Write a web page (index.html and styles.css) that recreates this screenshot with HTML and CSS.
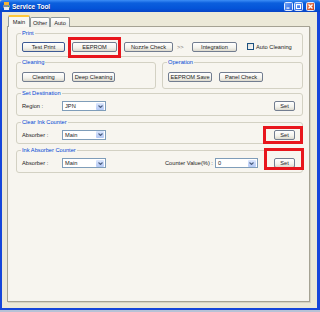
FILE: index.html
```html
<!DOCTYPE html>
<html lang="en">
<head>
    <meta charset="UTF-8">
    <meta name="viewport" content="width=device-width, initial-scale=1.0">
    <title>Service Tool</title>
    <link rel="stylesheet" href="styles.css">
</head>
<body>
    <div class="window">
        <div class="titlebar">
            <svg class="app-icon" width="7" height="8" viewBox="0 0 7 8">
                <rect x="1" y="0" width="5" height="3" fill="#f2b233"/>
                <rect x="0" y="3" width="7" height="3" fill="#7d8c9c"/>
                <rect x="1" y="5" width="5" height="3" fill="#ececec"/>
                <rect x="5" y="4" width="1" height="1" fill="#3fc43f"/>
            </svg>
            <span class="title">Service Tool</span>
            <div class="controls">
                <span class="ctl">
                    <svg width="7" height="7" viewBox="0 0 7 7"><rect x="1.5" y="4.5" width="3" height="1.2" fill="#fff"/></svg>
                </span>
                <span class="ctl">
                    <svg width="7" height="7" viewBox="0 0 7 7"><rect x="1.5" y="1.5" width="4" height="4" fill="none" stroke="#fff" stroke-width="1"/><rect x="1" y="1" width="5" height="1.2" fill="#fff"/></svg>
                </span>
                <span class="ctl ctl-close">
                    <svg width="7" height="7" viewBox="0 0 7 7"><path d="M1.5 1.5l4 4M5.5 1.5l-4 4" stroke="#fff" stroke-width="1.3"/></svg>
                </span>
            </div>
        </div>

        <div class="frame">
            <div class="tabs">
                <span class="tab tab-main active">Main</span>
                <span class="tab">Other</span>
                <span class="tab">Auto</span>
            </div>

            <div class="panel">
                <div class="group g-print">
                    <div class="group-title">Print</div>
                    <div class="row">
                        <button class="btn btn-default">Test Print</button>
                        <span class="mark mark-eeprom"><button class="btn btn-md">EEPROM</button></span>
                        <button class="btn btn-lg">Nozzle Check</button>
                        <span class="sep">&gt;&gt;</span>
                        <button class="btn btn-md">Integration</button>
                        <span class="check"></span>
                        <span class="check-label">Auto Cleaning</span>
                    </div>
                </div>

                <div class="pair">
                    <div class="group g-half">
                        <div class="group-title">Cleaning</div>
                        <div class="row">
                            <button class="btn">Cleaning</button>
                            <button class="btn">Deep Cleaning</button>
                        </div>
                    </div>
                    <div class="group g-half">
                        <div class="group-title">Operation</div>
                        <div class="row">
                            <button class="btn btn-op">EEPROM Save</button>
                            <button class="btn btn-op">Panel Check</button>
                        </div>
                    </div>
                </div>

                <div class="group g-dest">
                    <div class="group-title">Set Destination</div>
                    <div class="row">
                        <span class="field-label">Region :</span>
                        <div class="select">
                            <span class="select-value">JPN</span>
                            <span class="select-arrow"><svg width="5" height="3" viewBox="0 0 5 3"><path d="M0.5 0.5L2.5 2.5L4.5 0.5" fill="none" stroke="#4d6185" stroke-width="1.1"/></svg></span>
                        </div>
                        <button class="btn btn-sm push">Set</button>
                    </div>
                </div>

                <div class="group g-clear">
                    <div class="group-title">Clear Ink Counter</div>
                    <div class="row">
                        <span class="field-label">Absorber :</span>
                        <div class="select">
                            <span class="select-value">Main</span>
                            <span class="select-arrow"><svg width="5" height="3" viewBox="0 0 5 3"><path d="M0.5 0.5L2.5 2.5L4.5 0.5" fill="none" stroke="#4d6185" stroke-width="1.1"/></svg></span>
                        </div>
                        <span class="mark mark-clear push"><button class="btn btn-sm">Set</button></span>
                    </div>
                </div>

                <div class="group g-absorb">
                    <div class="group-title">Ink Absorber Counter</div>
                    <div class="row">
                        <span class="field-label">Absorber :</span>
                        <div class="select">
                            <span class="select-value">Main</span>
                            <span class="select-arrow"><svg width="5" height="3" viewBox="0 0 5 3"><path d="M0.5 0.5L2.5 2.5L4.5 0.5" fill="none" stroke="#4d6185" stroke-width="1.1"/></svg></span>
                        </div>
                        <span class="counter-label">Counter Value(%) :</span>
                        <div class="select select-counter">
                            <span class="select-value">0</span>
                            <span class="select-arrow"><svg width="5" height="3" viewBox="0 0 5 3"><path d="M0.5 0.5L2.5 2.5L4.5 0.5" fill="none" stroke="#4d6185" stroke-width="1.1"/></svg></span>
                        </div>
                        <span class="mark mark-absorb push"><button class="btn btn-sm">Set</button></span>
                    </div>
                </div>
            </div>
        </div>
    </div>
</body>
</html>
```

FILE: styles.css
```css
* {
    box-sizing: border-box;
}
body {
    margin: 0;
    width: 320px;
    height: 312px;
    overflow: hidden;
    background-color: #b7c2d6;
    font-family: "Liberation Sans", Arial, sans-serif;
    font-size: 5.7px;
    color: #222;
}
.window {
    height: 310px;
    display: flex;
    flex-direction: column;
}

/* title bar */
.titlebar {
    height: 12px;
    display: flex;
    align-items: center;
    padding: 0 5px 0 3px;
    border-radius: 3px 3px 0 0;
    background: linear-gradient(#3d8ef6 0%, #0b5fdd 25%, #0454d8 70%, #0844c6 100%);
}
.app-icon {
    margin-right: 2px;
}
.title {
    color: white;
    font-weight: bold;
    font-size: 6.5px;
    text-shadow: 0.5px 0.5px 0 #0a2b8c;
}
.controls {
    margin-left: auto;
    display: flex;
    gap: 1px;
}
.ctl {
    width: 9px;
    height: 9px;
    display: flex;
    align-items: center;
    justify-content: center;
    border: 1px solid #e4ecfb;
    border-radius: 1.5px;
    background: linear-gradient(135deg, #6fa2f7, #2a64e2);
}
.ctl-close {
    margin-left: 2px;
    background: linear-gradient(135deg, #ec8a66, #c93f15);
}

/* window body */
.frame {
    flex: 1;
    background-color: #ece9d8;
    border: solid #1646da;
    border-width: 0 3px 2px 2px;
    padding: 3px 0 0 5px;
}
.tabs {
    height: 12px;
    display: flex;
    align-items: flex-end;
    margin-left: 1px;
}
.tab {
    width: 20px;
    height: 10px;
    display: flex;
    align-items: center;
    justify-content: center;
    border: 1px solid #919b9c;
    border-bottom: none;
    border-radius: 2px 2px 0 0;
    background: linear-gradient(#ffffff, #ecebe5);
}
.tab-main {
    width: 22px;
}
.tab.active {
    height: 12px;
    position: relative;
    z-index: 1;
    border-top: 2px solid #ffc83c;
    background-color: #f9f8f4;
    background-image: none;
}
.panel {
    margin-top: -1px;
    width: 303px;
    height: 276px;
    padding: 6px 6px 0 8px;
    border: 1px solid #a5a293;
    box-shadow: 1px 1px 0 #d6d3c4;
    background-color: #f7f5ef;
}

/* group boxes */
.group {
    display: flex;
    flex-direction: column;
    padding: 0 5px;
    border: 1px solid #d3d1c3;
    border-radius: 3px;
}
.group-title {
    align-self: flex-start;
    height: 7px;
    line-height: 7px;
    margin: -4px 0 0 -1px;
    padding: 0 1px;
    color: #0046d5;
    background-color: #f7f5ef;
}
.g-print {
    height: 24px;
}
.pair {
    display: grid;
    grid-template-columns: 140px 1fr;
    gap: 6px;
    margin-top: 5px;
}
.g-half {
    height: 27px;
}
.g-dest {
    height: 23px;
    margin-top: 4px;
}
.g-clear {
    height: 22px;
    margin-top: 6px;
}
.g-absorb {
    height: 23px;
    margin-top: 6px;
}
.row {
    flex: 1;
    display: flex;
    align-items: center;
}

/* controls */
.btn {
    width: 43px;
    height: 10px;
    padding: 0;
    font: inherit;
    line-height: 8px;
    color: #222;
    text-align: center;
    border: 1px solid #727d90;
    border-radius: 2px;
    background: linear-gradient(#ffffff, #f3f2ec 60%, #dcd9cd);
}
.btn-default {
    border-color: #3d5a94;
}
.btn-md {
    width: 45px;
}
.btn-lg {
    width: 49px;
}
.btn-op {
    width: 44px;
}
.btn-sm {
    width: 21px;
}
.btn + .btn,
.btn + .mark,
.mark + .btn {
    margin-left: 7px;
}
.push {
    margin-left: auto;
    margin-right: 2px;
}
.sep {
    width: 7px;
    margin: 0 8px 0 4px;
    color: #777;
}
.check {
    width: 7px;
    height: 7px;
    margin-left: 10px;
    border: 1px solid #1c5180;
    background: linear-gradient(135deg, #dcdcd6, #ffffff);
}
.check-label {
    margin-left: 2px;
}
.field-label {
    width: 40px;
}
.counter-label {
    margin-left: 59px;
}
.select {
    width: 44px;
    height: 10px;
    display: flex;
    align-items: center;
    padding-right: 1px;
    border: 1px solid #7f9db9;
    background-color: white;
}
.select-counter {
    width: 43px;
    margin-left: 2px;
}
.select-value {
    flex: 1;
    padding-left: 2px;
}
.select-arrow {
    width: 8px;
    height: 7px;
    display: flex;
    align-items: center;
    justify-content: center;
    border-radius: 1px;
    background: linear-gradient(#dce7fd, #b3c8f5);
}

/* red highlight frames */
.mark {
    position: relative;
    display: flex;
}
.mark::after {
    content: "";
    position: absolute;
    border: 3px solid #e8161d;
    pointer-events: none;
}
.mark-eeprom::after {
    top: -5px;
    left: -4px;
    right: -4px;
    bottom: -6px;
}
.mark-clear::after {
    top: -4px;
    left: -11px;
    right: -8px;
    bottom: -4px;
}
.mark-absorb::after {
    top: -10px;
    left: -10px;
    right: -9px;
    bottom: -2px;
}
```
